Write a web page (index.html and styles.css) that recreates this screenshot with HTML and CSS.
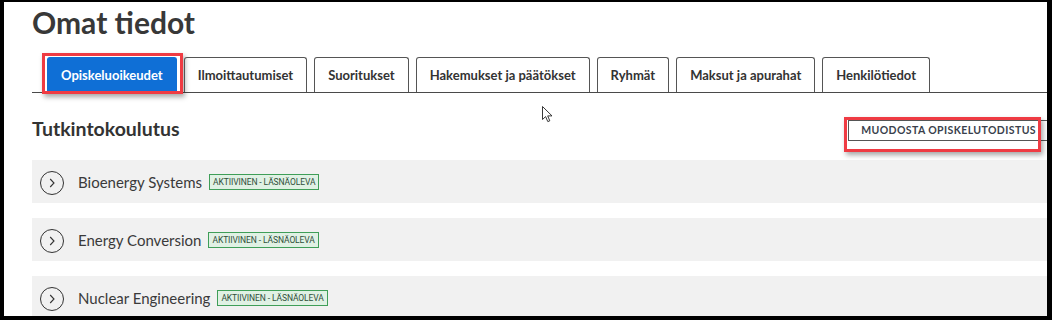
FILE: index.html
```html
<!DOCTYPE html>
<html lang="fi">
<head>
<meta charset="utf-8">
<title>Omat tiedot</title>
<link rel="stylesheet" href="styles.css">
</head>
<body>
<div class="frame">
  <div class="page">
    <h1 class="title">Omat tiedot</h1>
    <nav class="tabs">
      <a class="tab tab-active">Opiskeluoikeudet<span class="highlight highlight-tab"></span></a>
      <a class="tab">Ilmoittautumiset</a>
      <a class="tab">Suoritukset</a>
      <a class="tab">Hakemukset ja päätökset</a>
      <a class="tab">Ryhmät</a>
      <a class="tab">Maksut ja apurahat</a>
      <a class="tab">Henkilötiedot</a>
    </nav>
    <div class="section-head">
      <h2 class="section-title">Tutkintokoulutus</h2>
      <button class="cert-btn">MUODOSTA OPISKELUTODISTUS<span class="highlight highlight-btn"></span></button>
    </div>
    <ul class="list">
      <li class="item">
        <span class="toggle"><svg viewBox="0 0 24 24" width="24" height="24"><circle cx="12" cy="12" r="11.5" fill="none" stroke="#333" stroke-width="1"/><path d="M10.2 8 L14 12 L10.2 16" fill="none" stroke="#333" stroke-width="1.1"/></svg></span>
        <span class="item-name">Bioenergy Systems</span>
        <span class="badge">AKTIIVINEN - LÄSNÄOLEVA</span>
      </li>
      <li class="item">
        <span class="toggle"><svg viewBox="0 0 24 24" width="24" height="24"><circle cx="12" cy="12" r="11.5" fill="none" stroke="#333" stroke-width="1"/><path d="M10.2 8 L14 12 L10.2 16" fill="none" stroke="#333" stroke-width="1.1"/></svg></span>
        <span class="item-name">Energy Conversion</span>
        <span class="badge">AKTIIVINEN - LÄSNÄOLEVA</span>
      </li>
      <li class="item">
        <span class="toggle"><svg viewBox="0 0 24 24" width="24" height="24"><circle cx="12" cy="12" r="11.5" fill="none" stroke="#333" stroke-width="1"/><path d="M10.2 8 L14 12 L10.2 16" fill="none" stroke="#333" stroke-width="1.1"/></svg></span>
        <span class="item-name">Nuclear Engineering</span>
        <span class="badge">AKTIIVINEN - LÄSNÄOLEVA</span>
      </li>
    </ul>
  </div>
  <svg class="cursor" viewBox="0 0 12 18" width="12" height="18"><path d="M0.5 0.5 L0.5 13.5 L3.6 10.6 L5.8 15.6 L7.8 14.8 L5.7 9.9 L10 9.9 Z" fill="#fff" stroke="#222" stroke-width="0.9" stroke-linejoin="round"/></svg>
</div>
</body>
</html>
```

FILE: styles.css
```css
* { box-sizing: border-box; }
html, body { margin: 0; padding: 0; background: #fff; }
body { font-family: Lato, "Open Sans", sans-serif; color: #333; }

.frame {
  position: relative;
  width: 1052px;
  height: 320px;
  border-style: solid;
  border-color: #000;
  border-width: 2px 5px 4px 4px;
  overflow: hidden;
  background: #fff;
}

.page {
  padding: 0 0 0 28px;
}

.title {
  margin: 0;
  padding-top: 2px;
  font-size: 30px;
  line-height: 36px;
  font-weight: 700;
  color: #383838;
}

.tabs {
  display: flex;
  align-items: flex-end;
  gap: 7px;
  margin-top: 17px;
  padding-left: 15px;
  border-bottom: 1px solid #4a4a4a;
}

.tab {
  position: relative;
  display: block;
  height: 35px;
  padding: 0 13px;
  border: 1px solid #555;
  border-bottom: none;
  border-radius: 3px 3px 0 0;
  font-size: 13px;
  font-weight: 700;
  line-height: 34px;
  color: #333;
  white-space: nowrap;
}

.tab-active {
  background: #0f6fd6;
  border-color: #0f6fd6;
  color: #fff;
  height: 34px;
  margin-bottom: 1px;
}

.highlight {
  position: absolute;
  border: 3px solid #ef3b43;
  box-shadow: 2px 3px 5px rgba(0, 0, 0, 0.35);
  pointer-events: none;
}

.highlight-tab {
  left: -6px;
  top: -5px;
  right: -7px;
  bottom: -3px;
}

.section-head {
  display: flex;
  justify-content: space-between;
  align-items: flex-end;
  margin-top: 24px;
}

.section-title {
  margin: 0;
  font-size: 19.5px;
  line-height: 24px;
  font-weight: 700;
  color: #333;
}

.cert-btn {
  position: relative;
  height: 21px;
  margin-right: -4px;
  padding: 0 14px 0 12px;
  background: #fff;
  border: 1px solid #555;
  border-radius: 0;
  font-family: Lato, "Open Sans", sans-serif;
  font-size: 10.5px;
  font-weight: 700;
  letter-spacing: 0.4px;
  line-height: 19px;
  color: #3a3f4c;
}

.highlight-btn {
  left: -5px;
  top: -4px;
  right: 9px;
  bottom: -12px;
}

.list {
  list-style: none;
  margin: 19px 0 0;
  padding: 0;
  display: flex;
  flex-direction: column;
  gap: 15px;
}

.item {
  display: flex;
  align-items: center;
  height: 43px;
  padding-left: 8px;
  background: #f1f1f1;
}

.toggle {
  display: flex;
  width: 24px;
  height: 24px;
  margin-top: 3px;
  margin-right: 14px;
}

.item-name {
  font-size: 15px;
  color: #3a3a3a;
  margin-right: 7px;
}

.badge {
  display: inline-block;
  height: 16px;
  padding: 0 3px;
  border: 1px solid #3f9e58;
  background: #e0f1e4;
  font-family: Roboto, sans-serif;
  font-size: 8.5px;
  font-weight: 400;
  line-height: 14px;
  color: #2f4f3a;
  white-space: nowrap;
  letter-spacing: -0.1px;
}

.cursor {
  position: absolute;
  left: 538px;
  top: 104px;
}
```
